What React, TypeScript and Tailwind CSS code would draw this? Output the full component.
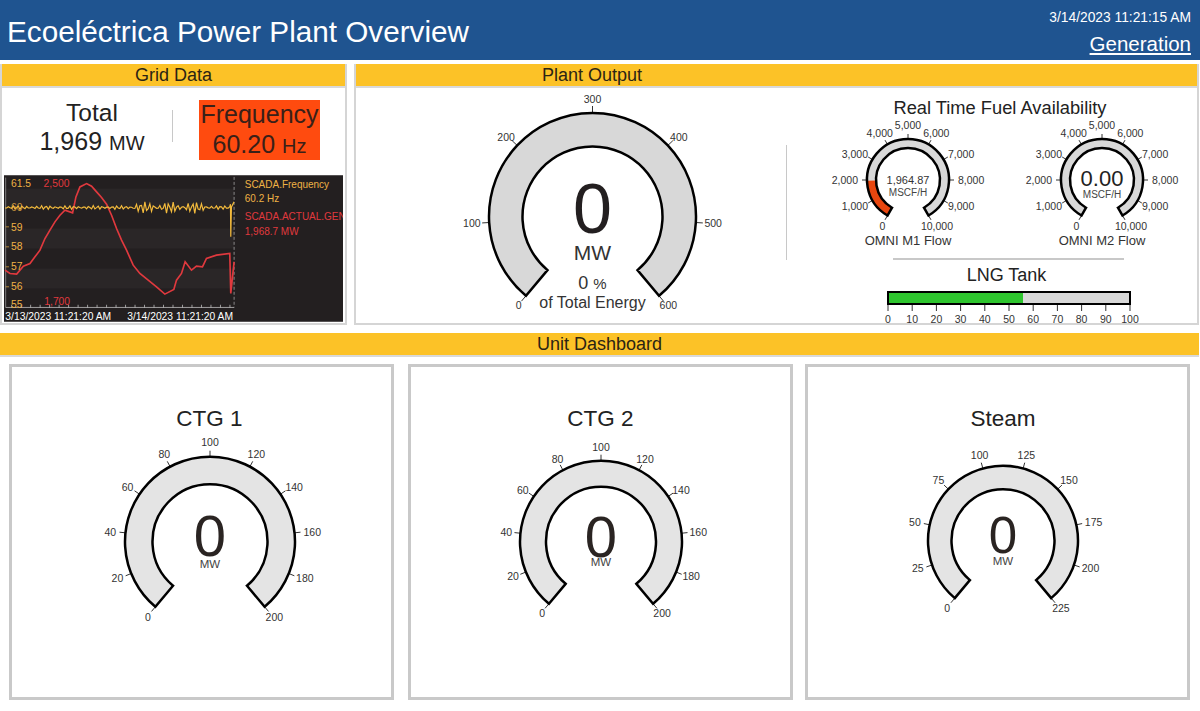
const FONT = "[font-family:'Liberation_Sans',Arial,sans-serif]"

type GaugeProps = {
  width: number
  height: number
  cx: number
  cy: number
  outer: number
  inner: number
  labels: string[]
  stroke: number
  tick: number
  labelRadius: number
  fontSize: number
  track: string
  half?: number
  fillTo?: number
  children?: React.ReactNode
}

function polar(cx: number, cy: number, r: number, deg: number) {
  const a = (deg * Math.PI) / 180
  return [cx + r * Math.sin(a), cy - r * Math.cos(a)]
}

function arcPath(cx: number, cy: number, outer: number, inner: number, from: number, to: number) {
  const [x1, y1] = polar(cx, cy, outer, from)
  const [x2, y2] = polar(cx, cy, outer, to)
  const [x3, y3] = polar(cx, cy, inner, to)
  const [x4, y4] = polar(cx, cy, inner, from)
  const large = to - from > 180 ? 1 : 0
  return `M${x1} ${y1}A${outer} ${outer} 0 ${large} 1 ${x2} ${y2}L${x3} ${y3}A${inner} ${inner} 0 ${large} 0 ${x4} ${y4}Z`
}

function Gauge({ width, height, cx, cy, outer, inner, labels, stroke, tick, labelRadius, fontSize, track, half = 140, fillTo, children }: GaugeProps) {
  const step = (half * 2) / (labels.length - 1)
  return (
    <svg width={width} height={height} className="block shrink-0">
      {labels.map((label, i) => {
        const deg = -half + i * step
        const [x1, y1] = polar(cx, cy, outer, deg)
        const [x2, y2] = polar(cx, cy, outer + tick, deg)
        const a = (deg * Math.PI) / 180
        const hw = (label.length * fontSize * 0.5) / 2
        const hh = fontSize * 0.42
        const x = cx + (labelRadius + hw * Math.abs(Math.sin(a))) * Math.sin(a)
        const y = cy - (labelRadius + hh * Math.abs(Math.cos(a))) * Math.cos(a)
        return (
          <g key={label}>
            <line x1={x1} y1={y1} x2={x2} y2={y2} stroke="#333" strokeWidth={1} />
            <text x={x} y={y + fontSize * 0.36} textAnchor="middle" fontSize={fontSize} fill="#333">
              {label}
            </text>
          </g>
        )
      })}
      <path d={arcPath(cx, cy, outer, inner, -half, half)} fill={track} />
      {fillTo !== undefined && <path d={arcPath(cx, cy, outer, inner, -half, -half + fillTo * half * 2)} fill="#e8460f" />}
      <path d={arcPath(cx, cy, outer, inner, -half, half)} fill="none" stroke="#000" strokeWidth={stroke} />
      {children}
    </svg>
  )
}

function Bar({ title, className }: { title: string; className?: string }) {
  return (
    <div className={`h-[24px] bg-[#fcc227] flex items-center justify-center text-[18px] text-[#2b2414] border-b-2 border-[#d9d9d9] ${className ?? ""}`}>
      {title}
    </div>
  )
}

const red = [
  [15, 630], [30, 640], [50, 642], [70, 618], [90, 610], [105, 590], [120, 570], [135, 535], [150, 510], [165, 485], [180, 465], [195, 450], [218, 458], [228, 410], [240, 380], [260, 370], [275, 378], [290, 395], [305, 412], [320, 432], [335, 465], [350, 505], [365, 540], [380, 570], [400, 615], [420, 640], [445, 660], [470, 680], [495, 702], [522, 688], [530, 660], [545, 640], [556, 605], [575, 630], [590, 618], [608, 620], [620, 595], [650, 585], [690, 580], [693, 700], [703, 605],
]

function yellowLine() {
  const pts: string[] = []
  for (let x = 15; x < 692; x += 5) {
    const wild = x > 390 && x < 620 ? 10 : 4
    const y = 442 + Math.sin(x * 1.7) * wild + Math.cos(x * 0.73) * (wild - 2)
    pts.push(`${x},${y.toFixed(1)}`)
  }
  pts.push("692,432", "693,530", "695,440", "703,425")
  return pts.join(" ")
}

function Chart() {
  const left = ["59", "58", "57", "56", "55"]
  return (
    <svg viewBox="12 345 1018 440" width={339} height={147} className="block">
      <rect x={12} y={345} width={1018} height={440} fill="#231f20" />
      {[385, 505, 625].map((y) => (
        <rect key={y} x={15} y={y} width={688} height={60} fill="#2a2627" />
      ))}
      <line x1={17} y1={352} x2={17} y2={742} stroke="#aaa" strokeWidth={2} />
      <line x1={17} y1={742} x2={703} y2={742} stroke="#ddd" strokeWidth={2} />
      <line x1={703} y1={350} x2={703} y2={742} stroke="#bbb" strokeWidth={2} strokeDasharray="9 6" />
      {Array.from({ length: 24 }, (_, i) => (
        <line key={i} x1={35 + i * 28.5} y1={734} x2={35 + i * 28.5} y2={742} stroke="#ddd" strokeWidth={2} />
      ))}
      {[500, 560, 620, 680].map((y) => (
        <line key={y} x1={17} y1={y} x2={27} y2={y} stroke="#f3b440" strokeWidth={2} />
      ))}
      <polyline points={red.map((p) => p.join(",")).join(" ")} fill="none" stroke="#e0393e" strokeWidth={5} />
      <polyline points={yellowLine()} fill="none" stroke="#f4bb3c" strokeWidth={3.5} />
      <g fontSize={31} fill="#efb245">
        <text x={33} y={380}>61.5</text>
        <text x={33} y={452} opacity={0.8}>60</text>
        {left.map((t, i) => (
          <text key={t} x={33} y={511 + i * 60 - (i === 4 ? 8 : 0)}>{t}</text>
        ))}
        <text x={735} y={383} fontSize={30}>SCADA.Frequency</text>
        <text x={735} y={426} fontSize={30}>60.2 Hz</text>
      </g>
      <g fontSize={31} fill="#e0393e">
        <text x={131} y={380}>2,500</text>
        <text x={133} y={736}>1,700</text>
        <text x={735} y={478} fontSize={30}>SCADA.ACTUAL.GEN</text>
        <text x={735} y={523} fontSize={30}>1,968.7 MW</text>
      </g>
      <g fontSize={31} fill="#fff">
        <text x={16} y={779}>3/13/2023 11:21:20 AM</text>
        <text x={382} y={779}>3/14/2023 11:21:20 AM</text>
      </g>
    </svg>
  )
}

const fuelLabels = ["0", "1,000", "2,000", "3,000", "4,000", "5,000", "6,000", "7,000", "8,000", "9,000", "10,000"]
const ctgLabels = ["0", "20", "40", "60", "80", "100", "120", "140", "160", "180", "200"]
const steamLabels = ["0", "25", "50", "75", "100", "125", "150", "175", "200", "225"]

type UnitProps = {
  title: string
  shift: string
  outer: number
  inner: number
  cy: number
  labels: string[]
  size: number
  lr: number
  zero: number
  unit: number
}

function UnitCard({ title, shift, outer, inner, cy, labels, size, lr, zero, unit }: UnitProps) {
  return (
    <div className={`w-[385px] h-[336px] border-[3px] border-[#c9c9c9] flex flex-col items-center pt-[39px] ${shift}`}>
      <div className="h-[26px] leading-[26px] text-[22.5px] text-[#222]">{title}</div>
      <Gauge width={300} height={230} cx={150} cy={cy} outer={outer} inner={inner} labels={labels} stroke={2.5} tick={6} labelRadius={lr} fontSize={10.5} track="#e4e4e4">
        <text x={150} y={zero} textAnchor="middle" fontSize={size} fill="#2a2422">0</text>
        <text x={150} y={unit} textAnchor="middle" fontSize={11.5} fill="#444">MW</text>
      </Gauge>
    </div>
  )
}

export default function App() {
  return (
    <div className={`w-[1200px] h-[711px] overflow-hidden bg-white flex flex-col ${FONT}`}>
      <header className="h-[60px] bg-[#1f5490] flex items-start justify-between pl-[7px] pr-[9px] text-white shrink-0">
        <h1 className="text-[29.7px] leading-none mt-[17px]">Ecoeléctrica Power Plant Overview</h1>
        <div className="flex flex-col items-end pt-[10px]">
          <div className="text-[13.8px] leading-[16px]">3/14/2023 11:21:15 AM</div>
          <div className="text-[20.5px] leading-[24px] underline mt-[6px]">Generation</div>
        </div>
      </header>

      <div className="flex gap-[7px] mt-[4px] h-[261px] shrink-0">
        <section className="w-[347px] border-2 border-t-0 border-[#d5d5d5] flex flex-col">
          <Bar title="Grid Data" />
          <div className="flex items-start h-[87px] pl-[2px]">
            <div className="w-[168px] pl-[8px] mt-[11px] flex flex-col items-center text-[#222]">
              <div className="text-[24.5px] leading-[28px]">Total</div>
              <div className="text-[25px] leading-[28px]">1,969 <span className="text-[20px]">MW</span></div>
            </div>
            <div className="w-[1px] h-[32px] mt-[22px] bg-[#c8c8c8]" />
            <div className="ml-[26px] mt-[12px] w-[121px] h-[60px] bg-[#ff4b0f] flex flex-col items-center justify-center text-[#3a2018]">
              <div className="text-[25px] leading-[30px]">Frequency</div>
              <div className="text-[25px] leading-[30px]">60.20 <span className="text-[20px]">Hz</span></div>
            </div>
          </div>
          <div className="ml-[2px]">
            <Chart />
          </div>
        </section>

        <section className="flex-1 mr-[1px] border-2 border-t-0 border-[#d5d5d5] flex flex-col">
          <Bar title="Plant Output" className="pr-[369px]" />
          <div className="flex flex-1">
            <Gauge width={430} height={235} cx={236.5} cy={128.5} outer={103.5} inner={70} labels={["0", "100", "200", "300", "400", "500", "600"]} stroke={2.5} tick={7} labelRadius={113} fontSize={10.5} track="#d8d8d8">
              <text x={236.5} y={145} textAnchor="middle" fontSize={70} fill="#231f20">0</text>
              <text x={236.5} y={172} textAnchor="middle" fontSize={21} fill="#333">MW</text>
              <text x={236.5} y={201} textAnchor="middle" fontSize={18} fill="#333">0 <tspan fontSize={15}>%</tspan></text>
              <text x={236.5} y={220} textAnchor="middle" fontSize={16} fill="#333">of Total Energy</text>
            </Gauge>
            <div className="w-[1px] h-[115px] mt-[57px] bg-[#c8c8c8]" />
            <div className="flex flex-col flex-1">
              <div className="mt-[10px] h-[20px] leading-[20px] text-[18.3px] text-center text-[#222] mr-[-16px]">Real Time Fuel Availability</div>
              <div className="flex gap-[24px] ml-[36px]">
                <div className="flex flex-col items-center">
                  <Gauge width={170} height={115} cx={85} cy={62} outer={41} inner={32} half={150} labels={fuelLabels} stroke={2.5} tick={5} labelRadius={50} fontSize={10.5} track="#d8d8d8" fillTo={0.1965}>
                    <text x={85} y={66} textAnchor="middle" fontSize={11} fill="#333">1,964.87</text>
                    <text x={85} y={78} textAnchor="middle" fontSize={10} fill="#444">MSCF/H</text>
                  </Gauge>
                  <div className="h-[16px] leading-[16px] text-[13px] text-[#333]">OMNI M1 Flow</div>
                </div>
                <div className="flex flex-col items-center">
                  <Gauge width={170} height={115} cx={85} cy={62} outer={41} inner={32} half={150} labels={fuelLabels} stroke={2.5} tick={5} labelRadius={50} fontSize={10.5} track="#d8d8d8">
                    <text x={85} y={68} textAnchor="middle" fontSize={22} fill="#222">0.00</text>
                    <text x={85} y={80} textAnchor="middle" fontSize={10} fill="#444">MSCF/H</text>
                  </Gauge>
                  <div className="h-[16px] leading-[16px] text-[13px] text-[#333]">OMNI M2 Flow</div>
                </div>
              </div>
              <div className="mt-[9px] ml-[106px] w-[231px] h-[2px] bg-[#c8c8c8]" />
              <div className="mt-[5px] h-[20px] leading-[20px] text-[18px] text-center text-[#222] mr-[-29px]">LNG Tank</div>
              <div className="mt-[6px] ml-[100px] w-[244px] h-[14px] border-2 border-black bg-[#d8d8d8]">
                <div className="w-[56%] h-full bg-[#2ec52e]" />
              </div>
              <svg width={260} height={20} className="block ml-[94px]">
                {Array.from({ length: 11 }, (_, i) => (
                  <g key={i}>
                    <line x1={7 + i * 24.2} y1={0} x2={7 + i * 24.2} y2={6} stroke="#333" />
                    <text x={7 + i * 24.2} y={18} textAnchor="middle" fontSize={10.5} fill="#333">{i * 10}</text>
                  </g>
                ))}
              </svg>
            </div>
          </div>
        </section>
      </div>

      <section className="mt-[8px] flex flex-col flex-1">
        <Bar title="Unit Dashboard" className="mr-[1px]" />
        <div className="flex pl-[9px] pt-[7px] gap-[12px]">
          <UnitCard title="CTG 1" shift="pl-[16px]" outer={85} inner={57.5} cy={109.7} labels={ctgLabels} size={58} lr={95} zero={124} unit={136} />
          <UnitCard title="CTG 2" shift="ml-[2px]" outer={81} inner={55} cy={109.7} labels={ctgLabels} size={58} lr={90} zero={125} unit={134} />
          <UnitCard title="Steam" shift="pl-[11px]" outer={75} inner={51.5} cy={108.7} labels={steamLabels} size={51} lr={85} zero={121} unit={132.5} />
        </div>
      </section>
    </div>
  )
}
